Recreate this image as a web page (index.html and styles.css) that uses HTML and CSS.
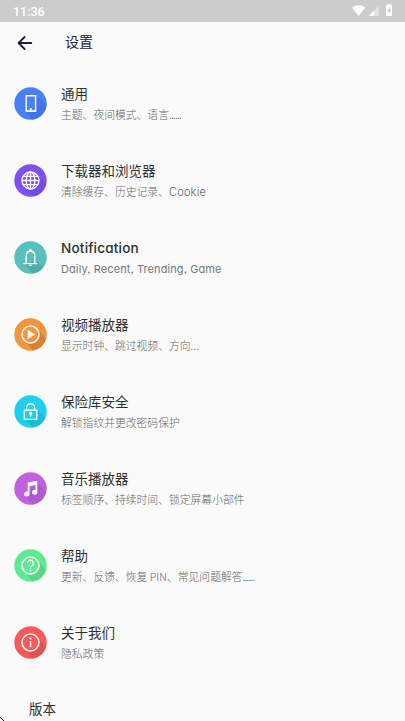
FILE: index.html
```
<!DOCTYPE html>
<html lang="zh-CN">
<head>
<meta charset="utf-8">
<title>设置</title>
<link rel="stylesheet" href="styles.css">
</head>
<body>
<div class="screen">
  <header class="status">
    <span class="clock">11:36</span>
    <svg class="status-icons" width="46" height="16" viewBox="0 0 46 16">
      <path d="M1 4.6Q7.7-.6 14.4 4.6L7.7 13Z" fill="#fff"/>
      <path d="M27.6 3.2V13H17.6Z" fill="#fff" opacity=".45"/>
      <path d="M23 7.8V13H17.6Z" fill="#fff"/>
      <path d="M35.8 2h1.4V.8h2.3V2H41v11h-6V2Z" fill="#fff"/>
      <path d="M38.9 3.4L36.3 8H37.6V11.2L40 6.7H38.9Z" fill="#ccc"/>
    </svg>
  </header>
  <nav class="toolbar">
    <svg width="16" height="16" viewBox="0 0 16 16" fill="none" stroke="#1b2135" stroke-width="1.8" stroke-linecap="round" stroke-linejoin="round"><path d="M14.3 8H2M7.6 2L1.6 8l6 6"/></svg>
    <h1>设置</h1>
  </nav>
  <main class="list">
    <section class="row">
      <svg class="icon" viewBox="0 0 33 33"><circle cx="16.5" cy="16.5" r="16.2" fill="#4a80f5"/><path d="M22 8.5L32.3 18.8A16.2 16.2 0 0 1 18.5 32.6L11.5 24.5Z" fill="#4274e4"/><path d="M12.2 8.8h9.4v15.4h-9.4Z" fill="#4a80f5" stroke="#fff" stroke-width="1.4"/><path d="M12 22.8h10v1.6H12Z" fill="#fff" opacity=".55"/><circle cx="16.9" cy="21.9" r="1" fill="#fff"/></svg>
      <div class="text"><h2>通用</h2><p>主题、夜间模式、语言<span class="dots">......</span></p></div>
    </section>
    <section class="row">
      <svg class="icon" viewBox="0 0 33 33"><circle cx="16.5" cy="16.5" r="16.2" fill="#7d50f3"/><path d="M23 10.5L31.8 20.5A16.2 16.2 0 0 1 20.5 32.2L10 23Z" fill="#7549e7"/><g fill="none" stroke="#fff" stroke-width="1.4"><circle cx="16.5" cy="16.5" r="8.5"/><ellipse cx="16.5" cy="16.5" rx="4.3" ry="8.5"/><path d="M16.5 8v17M8 16.5h17M9.4 12.4h14.2M9.4 20.6h14.2"/></g></svg>
      <div class="text"><h2>下载器和浏览器</h2><p>清除缓存、历史记录、<span class="latin cookie">Cookie</span></p></div>
    </section>
    <section class="row high">
      <svg class="icon" viewBox="0 0 33 33"><circle cx="16.5" cy="16.5" r="16.2" fill="#58c0bd"/><path d="M22.5 20L29.5 26A16.2 16.2 0 0 1 18.5 32.5L10.5 23.2Z" fill="#4daeab"/><g fill="none" stroke="#fff" stroke-width="1.4"><path d="M12.2 22.2V15Q12.2 10.3 16.5 10.3T20.8 15V22.2M9.9 22.6h13.2" stroke-linecap="round"/></g><circle cx="16.5" cy="9.2" r="1.3" fill="#fff"/><path d="M14.9 23.7h3.2q-.3 1.4-1.6 1.4t-1.6-1.4Z" fill="#fff"/></svg>
      <div class="text alert"><h2 class="latin notification">Notification</h2><p class="latin daily">Daily, Recent, Trending, Game</p></div>
    </section>
    <section class="row">
      <svg class="icon" viewBox="0 0 33 33"><circle cx="16.5" cy="16.5" r="16.2" fill="#f6943d"/><path d="M23.5 11L32 20.5A16.2 16.2 0 0 1 19 32.5L10.5 23Z" fill="#d98236"/><circle cx="16.5" cy="16.5" r="8.5" fill="#f6943d" stroke="#fff" stroke-width="1.5"/><path d="M13.7 11.8v9.4l7.3-4.7Z" fill="#fff"/></svg>
      <div class="text"><h2>视频播放器</h2><p>显示时钟、跳过视频、方向<span class="dots wide">...</span></p></div>
    </section>
    <section class="row high">
      <svg class="icon" viewBox="0 0 33 33"><circle cx="16.5" cy="16.5" r="16.2" fill="#20ceef"/><path d="M22.8 15L31.5 22.5A16.2 16.2 0 0 1 18.5 32.5L10.5 24.5Z" fill="#20b9db"/><path d="M10.4 15.2h12.4v9.2H10.4Z" fill="#20ceef" stroke="#fff" stroke-width="1.4"/><path d="M12.6 15v-2.3a4 4 0 0 1 8 0V15" fill="none" stroke="#fff" stroke-width="1.4"/><path d="M15 18.3a1.7 1.7 0 0 1 3.3 0q0 .7-.8 1.2v2.1h-1.7v-2.1Q15 19 15 18.3Z" fill="#fff"/></svg>
      <div class="text"><h2>保险库安全</h2><p>解锁指纹并更改密码保护</p></div>
    </section>
    <section class="row">
      <svg class="icon" viewBox="0 0 33 33"><circle cx="16.5" cy="16.5" r="16.2" fill="#c260df"/><path d="M23 10L32 19.5A16.2 16.2 0 0 1 18.5 32.5L11 24Z" fill="#b059ce"/><path d="M13.7 10.6L23.3 8.8V20.2a2.6 2.4 0 1 1-1.8-2.2V13.1L15.5 14.2V22a2.7 2.4 0 1 1-1.8-2.2Z" fill="#fff"/></svg>
      <div class="text"><h2>音乐播放器</h2><p>标签顺序、持续时间、锁定屏幕小部件</p></div>
    </section>
    <section class="row high">
      <svg class="icon" viewBox="0 0 33 33"><circle cx="16.5" cy="16.5" r="16.2" fill="#5eea91"/><path d="M23 10.5L31.8 21A16.2 16.2 0 0 1 18.5 32.5L10.5 22.8Z" fill="#55d784"/><circle cx="16.5" cy="16.5" r="8.5" fill="#5eea91" stroke="#fff" stroke-width="1.5"/><path d="M13.5 14.1a3 3 0 1 1 4.6 2.6Q16.6 17.5 16.5 19" fill="none" stroke="#fff" stroke-width="1.5" stroke-linecap="round"/><circle cx="16.5" cy="21.4" r="1" fill="#fff"/></svg>
      <div class="text"><h2>帮助</h2><p>更新、反馈、恢复 PIN、常见问题解答<span class="dots">......</span></p></div>
    </section>
    <section class="row high">
      <svg class="icon" viewBox="0 0 33 33"><circle cx="16.5" cy="16.5" r="16.2" fill="#fb5a5b"/><path d="M23 10.5L31.8 21A16.2 16.2 0 0 1 18.5 32.5L10.5 22.8Z" fill="#e05254"/><circle cx="16.5" cy="16.5" r="8.5" fill="#fb5a5b" stroke="#fff" stroke-width="1.5"/><path d="M16.5 15v6.2" stroke="#fff" stroke-width="1.5"/><circle cx="16.5" cy="12.4" r="1" fill="#fff"/></svg>
      <div class="text"><h2>关于我们</h2><p>隐私政策</p></div>
    </section>
  </main>
  <footer class="version">版本</footer>
  <svg class="corner" width="5" height="5" viewBox="0 0 5 5"><path d="M0 1h1v1h1v1h1v1h1v1H3V4H2V3H1V2H0Z" fill="#111"/></svg>
</div>
</body>
</html>
```
FILE: styles.css
```
* { box-sizing: border-box; }
body {
  margin: 0;
  background: #fafafa;
  color: #303030;
  font-family: "Noto Sans CJK SC", sans-serif;
}
.screen {
  position: relative;
  height: 721px;
  overflow: hidden;
}
h1, h2, p { margin: 0; font-weight: 400; white-space: nowrap; }
.status {
  height: 22px;
  display: flex;
  justify-content: space-between;
  padding: 4px 8px 0 13px;
  background: #ccc;
}
.status-icons { margin-top: -1px; }
.clock {
  color: #fff;
  font: 500 12.5px/16px Roboto, sans-serif;
}
.toolbar {
  height: 43px;
  display: flex;
  align-items: center;
  gap: 32px;
  padding: 0 0 2px 17px;
}
.toolbar h1 {
  color: #1b2135;
  font-size: 14px;
  line-height: 20px;
  margin-top: -4px;
}
.row {
  height: 77px;
  display: flex;
  align-items: center;
  gap: 14px;
  padding-left: 14px;
}
.high { padding-bottom: 1px; }
.icon { width: 33px; height: 33px; flex: none; }
.text { padding-bottom: 2px; }
.text h2 { font-size: 13.5px; line-height: 20px; }
.text p {
  color: #666;
  font-size: 10.8px;
  line-height: 16px;
  margin-top: 3px;
  font-weight: 300;
}
.latin {
  font-family: Inter, sans-serif;
  font-feature-settings: "cv11", "ss03";
}
.alert { padding-bottom: 0; }
.text .notification { font-size: 13.6px; font-weight: 500; letter-spacing: 0.17px; }
.text .daily { color: #777; font-size: 11px; font-weight: 400; letter-spacing: 0.1px; }
.cookie { font-size: 11px; line-height: 1; letter-spacing: 0.2px; }
.dots { letter-spacing: -0.7px; }
.wide { letter-spacing: 0.3px; }
.version {
  padding-left: 29px;
  font-size: 13.5px;
  line-height: 20px;
  margin-top: 17px;
}
.corner { position: absolute; left: 0; bottom: 0; }
```
